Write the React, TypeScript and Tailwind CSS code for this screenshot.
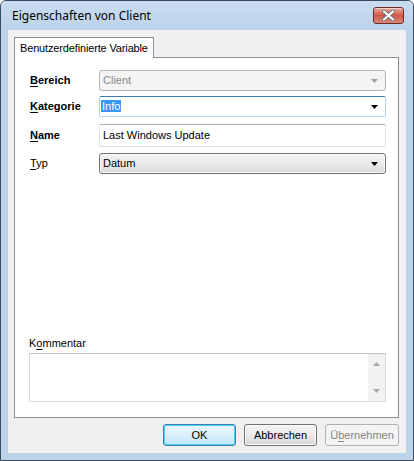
import { ReactNode } from 'react';

const dlg = { fontFamily: '"Liberation Sans", Arial, sans-serif' };

function Key({ children }: { children: ReactNode }) {
  return <span className="underline underline-offset-2">{children}</span>;
}

function Arrow({ gray }: { gray?: boolean }) {
  return (
    <svg width="7" height="4" viewBox="0 0 7 4" className="shrink-0">
      <path d="M0 0h7L3.5 4z" fill={gray ? '#a0a0a0' : '#000'} />
    </svg>
  );
}

function Row({ label, bold, children, className = '' }: { label: ReactNode; bold?: boolean; children: ReactNode; className?: string }) {
  return (
    <div className={`flex items-center ${className}`}>
      <div className={`w-[69px] shrink-0 text-[11px] text-black ${bold ? 'font-bold' : ''}`}>{label}</div>
      {children}
    </div>
  );
}

function CloseButton() {
  return (
    <div className="w-[31px] h-[17px] rounded-[3px] border border-[#6b2b25] bg-gradient-to-b from-[#e9a99b] via-[#d0584a] to-[#d98a78] flex items-center justify-center shadow-[inset_0_1px_0_rgba(255,255,255,0.5)]">
      <svg width="13" height="11" viewBox="0 0 13 11">
        <path d="M2 1.5l9 8M11 1.5l-9 8" stroke="#6d6d6d" strokeWidth="4" strokeLinecap="round" />
        <path d="M2 1.5l9 8M11 1.5l-9 8" stroke="#fff" strokeWidth="2.2" strokeLinecap="round" />
      </svg>
    </div>
  );
}

export default function App() {
  return (
    <div className="w-[414px] h-[461px] bg-white">
      <div className="w-full h-full flex flex-col border border-[#3b4a5c] rounded-t-[6px] bg-[#bdd3ea]" style={dlg}>
        {/* title bar */}
        <div className="h-[29px] shrink-0 flex items-center pl-[11px] pr-[9px] bg-gradient-to-b from-[#c9dcf1] to-[#bcd3eb] rounded-t-[5px]">
          <span className="flex-1 text-[12px] text-black" style={{ fontFamily: '"Noto Sans", "Open Sans", sans-serif' }}>
            Eigenschaften von Client
          </span>
          <CloseButton />
        </div>

        {/* client area */}
        <div className="flex-1 mx-[7px] mb-[7px] bg-[#f0f0f0] flex flex-col px-[6px] pt-[7px] pb-[7px]">
          {/* tab header */}
          <div className="flex">
            <div className="h-[21px] px-[5px] -mb-px relative z-10 bg-white border border-b-0 border-[#898c95] flex items-center text-[11px] tracking-[-0.15px] text-black">
              Benutzerdefinierte Variable
            </div>
          </div>

          {/* tab panel */}
          <div className="h-[361px] mr-px bg-white border border-[#898c95] flex flex-col pl-[15px] pr-[12px] pt-[12px] pb-[15px]">
            <Row label={<><Key>B</Key>ereich</>} bold>
              <div className="flex-1 h-[21px] rounded-[3px] border border-[#b5b5b5] bg-[#f4f4f4] flex items-center pl-[3px] pr-[7px] text-[11px] text-[#8a8a8a]">
                <span className="flex-1">Client</span>
                <Arrow gray />
              </div>
            </Row>

            <Row label={<><Key>K</Key>ategorie</>} bold className="mt-[5px]">
              <div className="flex-1 h-[21px] rounded-[2px] border border-[#3d7bad] border-b-[#b7d9ed] border-l-[#b5cfe7] border-r-[#b5cfe7] bg-white flex items-center pl-[1px] pr-[7px] text-[11px]">
                <span className="flex-1">
                  <span className="bg-[#3399ff] text-white px-px">Info</span>
                </span>
                <Arrow />
              </div>
            </Row>

            <Row label={<><Key>N</Key>ame</>} bold className="mt-[7px]">
              <div className="flex-1 h-[23px] rounded-[2px] border border-[#dde2e8] border-t-[#abadb3] bg-white flex items-center pl-[3px] text-[11px] text-black">
                Last Windows Update
              </div>
            </Row>

            <Row label={<><Key>T</Key>yp</>} className="mt-[6px]">
              <div className="flex-1 h-[21px] rounded-[3px] border border-[#707070] bg-gradient-to-b from-[#f2f2f2] via-[#ebebeb] to-[#d8d8d8] flex items-center pl-[3px] pr-[7px] text-[11px] text-black shadow-[inset_0_0_0_1px_#fbfbfb]">
                <span className="flex-1">Datum</span>
                <Arrow />
              </div>
            </Row>

            <div className="flex-1" />

            <div className="text-[11px] text-black mb-[2px] -ml-px">
              K<Key>o</Key>mmentar
            </div>
            <div className="h-[49px] -ml-px border border-[#dadada] border-t-[#c4c4c4] bg-white flex justify-end">
              <div className="w-[17px] bg-[#f2f2f2] flex flex-col items-center justify-between py-[8px]">
                <svg width="7" height="4" viewBox="0 0 7 4"><path d="M3.5 0L7 4H0z" fill="#a7a7a7" /></svg>
                <svg width="7" height="4" viewBox="0 0 7 4"><path d="M0 0h7L3.5 4z" fill="#a7a7a7" /></svg>
              </div>
            </div>
          </div>

          {/* buttons */}
          <div className="mt-auto flex justify-end gap-[8px] pr-[1px]">
            <button className="w-[73px] h-[22px] rounded-[3px] border border-[#3c7fb1] bg-gradient-to-b from-[#eaf6fd] via-[#d9f0fc] to-[#bee6fd] text-[11px] text-black shadow-[inset_0_0_0_1px_#48d0fa]">
              OK
            </button>
            <button className="w-[73px] h-[22px] rounded-[3px] border border-[#707070] bg-gradient-to-b from-[#f2f2f2] via-[#ebebeb] to-[#d6d6d6] text-[11px] text-black shadow-[inset_0_0_0_1px_#fcfcfc]">
              Abbrechen
            </button>
            <button className="w-[74px] h-[22px] rounded-[3px] border border-[#adb2b5] bg-[#f4f4f4] text-[11px] text-[#838383]">
              Ü<Key>b</Key>ernehmen
            </button>
          </div>
        </div>
      </div>
    </div>
  );
}
